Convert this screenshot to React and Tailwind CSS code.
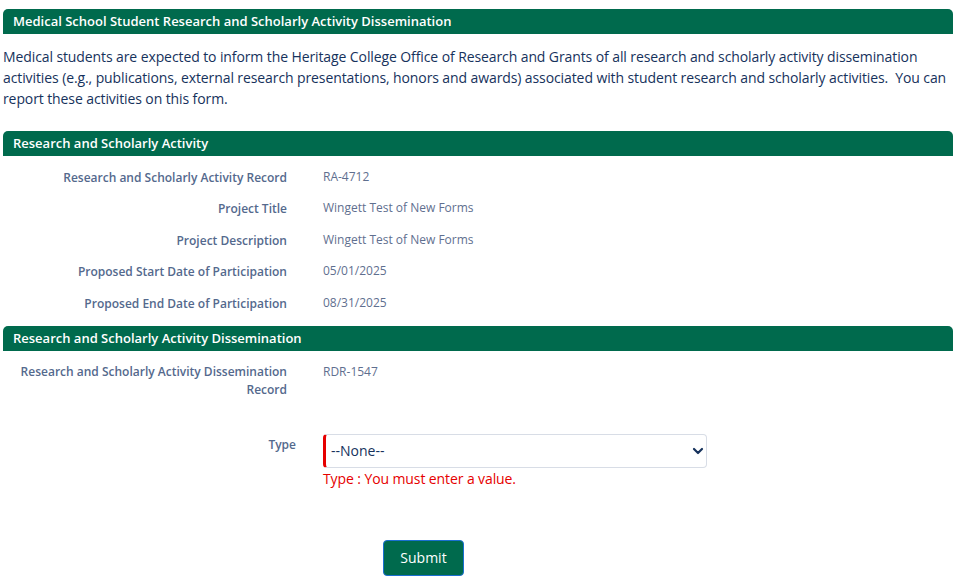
import { useState } from 'react'

const font = { fontFamily: '"Open Sans", Lato, sans-serif' }

function SectionHeader({ children }) {
  return (
    <div className="bg-[#006a4d] text-white font-semibold text-[13px] h-[25px] leading-[25px] px-[10px] rounded-t-[5px]">
      {children}
    </div>
  )
}

function Row({ label, value }) {
  return (
    <div className="flex h-[31.5px] items-center">
      <div className="w-[284px] text-right font-semibold text-[12px] text-[#54698d]">{label}</div>
      <div className="ml-[36px] text-[12px] text-[#5f6f8f] -mt-[2px]">{value}</div>
    </div>
  )
}

export default function App() {
  const [type, setType] = useState('')

  return (
    <div className="bg-white min-h-[585px] pt-[9px] px-[3px] w-[956px]" style={font}>
      <SectionHeader>Medical School Student Research and Scholarly Activity Dissemination</SectionHeader>
      <p className="text-[14px] leading-[21px] tracking-[-0.1px] text-[#16325c] mt-[12px]">
        Medical students are expected to inform the Heritage College Office of Research and Grants of all research and scholarly activity dissemination activities (e.g., publications, external research presentations, honors and awards) associated with student research and scholarly activities.&nbsp; You can report these activities on this form.
      </p>

      <div className="mt-[22px]">
        <SectionHeader>Research and Scholarly Activity</SectionHeader>
        <div className="pt-[6px]">
          <Row label="Research and Scholarly Activity Record" value="RA-4712" />
          <Row label="Project Title" value="Wingett Test of New Forms" />
          <Row label="Project Description" value="Wingett Test of New Forms" />
          <Row label="Proposed Start Date of Participation" value="05/01/2025" />
          <Row label="Proposed End Date of Participation" value="08/31/2025" />
        </div>
      </div>

      <div className="mt-[6px]">
        <SectionHeader>Research and Scholarly Activity Dissemination</SectionHeader>
        <div className="flex pt-[12px]">
          <div className="w-[284px] flex justify-end">
            <div className="w-[270px] text-right font-semibold text-[12px] leading-[18px] text-[#54698d]">
              Research and Scholarly Activity Dissemination Record
            </div>
          </div>
          <div className="ml-[36px] text-[12px] leading-[18px] text-[#5f6f8f]">RDR-1547</div>
        </div>

        <div className="flex mt-[35px]">
          <div className="w-[293px] text-right font-semibold text-[12px] leading-[18px] text-[#54698d] pt-[2px]">Type</div>
          <div className="ml-[27px] w-[384px]">
            <div className="relative">
              <select
                value={type}
                onChange={e => setType(e.target.value)}
                className="appearance-none w-full h-[34px] border border-[#d8dde6] border-l-[3px] border-l-[#e60000] rounded-[4px] pl-[5px] pr-8 text-[14px] text-[#16325c] bg-white outline-none"
              >
                <option value="">--None--</option>
                <option value="publication">Publication</option>
                <option value="presentation">External Research Presentation</option>
                <option value="award">Honor or Award</option>
              </select>
              <svg className="absolute right-[3px] top-[12px] w-[12px] h-[10px] pointer-events-none" viewBox="0 0 12 10">
                <path d="M2 3 L6 7 L10 3" fill="none" stroke="#16325c" strokeWidth="2.2" strokeLinecap="round" strokeLinejoin="round" />
              </svg>
            </div>
            <div className="text-[14px] text-[#e60000] mt-[1px] leading-[20px] tracking-[-0.1px]">Type : You must enter a value.</div>
          </div>
        </div>

        <div className="flex mt-[51px]">
          <button className="ml-[380px] w-[81px] h-[36px] bg-[#006a4d] text-white text-[14px] rounded-[4px] border border-[#1a6fd1]">
            Submit
          </button>
        </div>
      </div>
    </div>
  )
}
